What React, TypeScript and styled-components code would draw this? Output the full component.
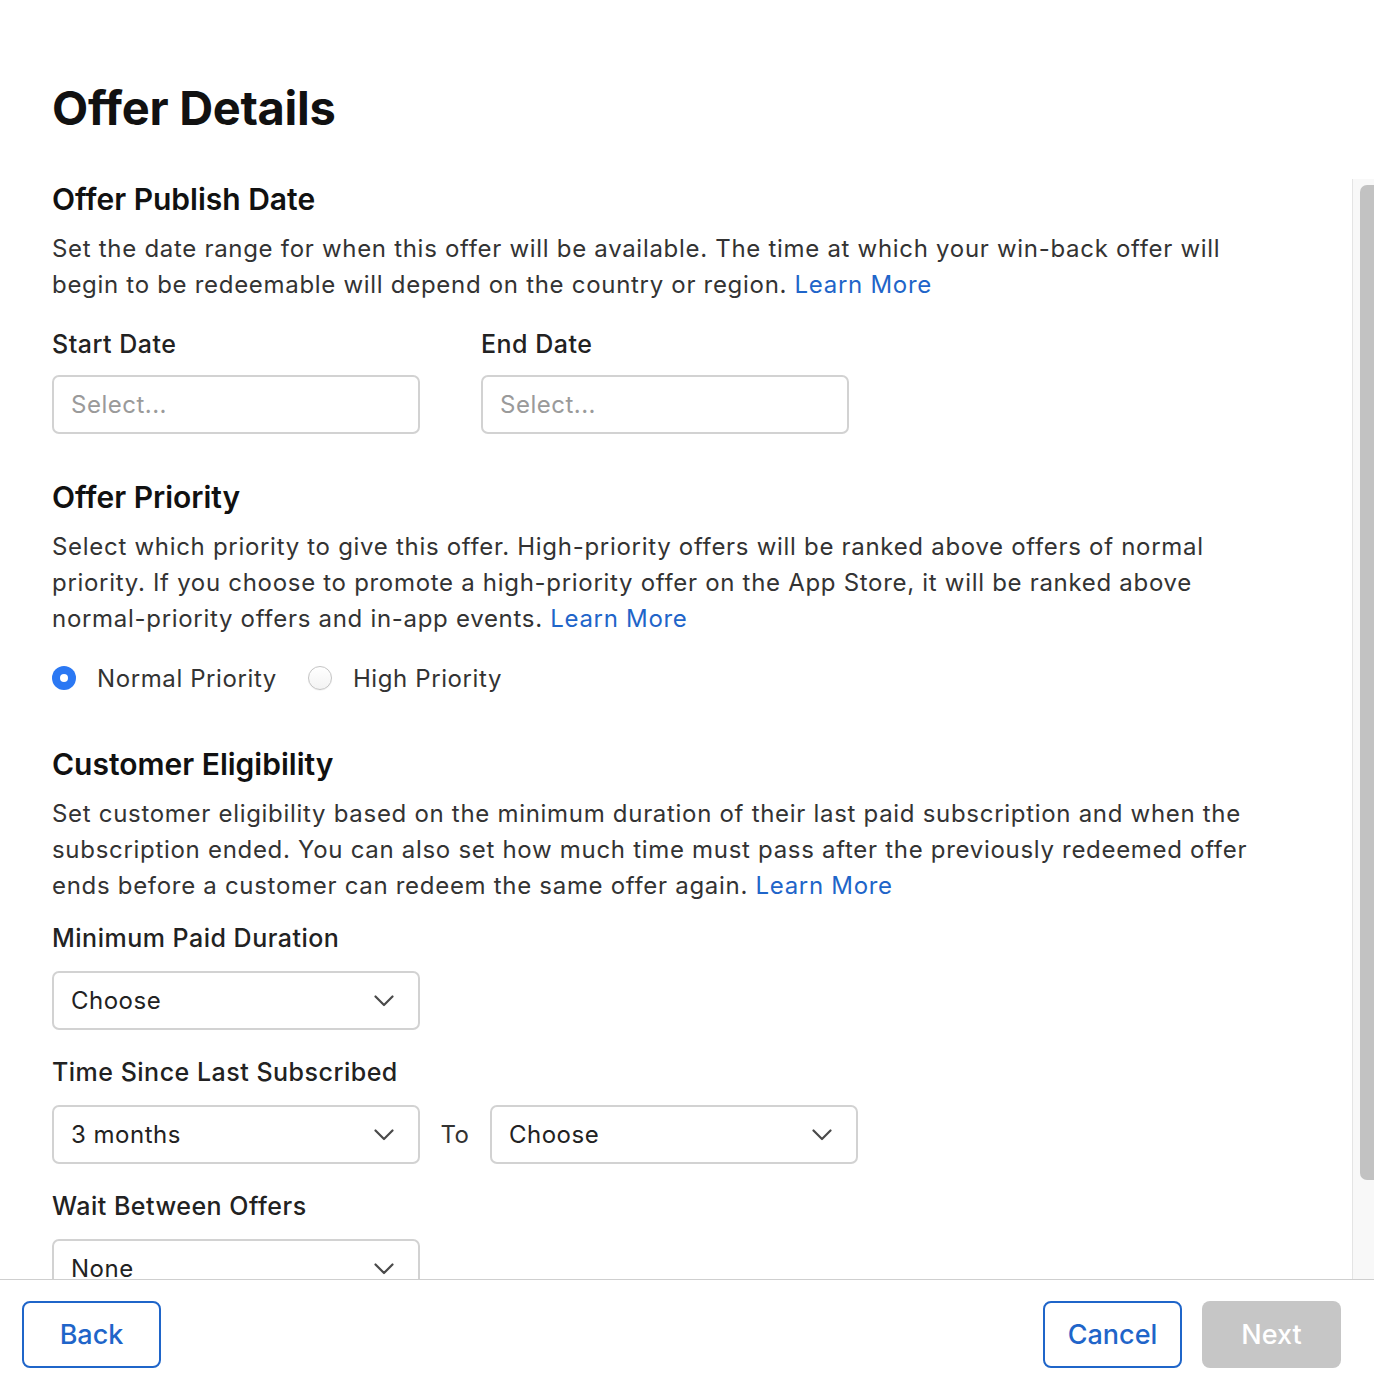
import React from "react";
import styled, { createGlobalStyle } from "styled-components";

const Global = createGlobalStyle`
  html, body { margin: 0; padding: 0; background: #fff; }
  body { font-family: Inter, "Noto Sans", "Liberation Sans", sans-serif; color: #333; }
  * { box-sizing: border-box; }
`;

const Page = styled.div`
  width: 1374px;
  height: 1386px;
  display: flex;
  flex-direction: column;
  background: #fff;
  overflow: hidden;
`;

const Header = styled.header`
  height: 179px;
  flex: none;
  padding: 80px 52px 0;
`;

const Title = styled.h1`
  margin: 0;
  font-size: 47px;
  line-height: 56px;
  font-weight: 700;
  color: #111;
  letter-spacing: -0.3px;
`;

const Body = styled.div`
  flex: 1;
  min-height: 0;
  display: flex;
`;

const Content = styled.main`
  flex: 1;
  min-width: 0;
  overflow: hidden;
  padding: 0 0 0 52px;
`;

const Track = styled.div`
  width: 22px;
  flex: none;
  background: #f8f8f8;
  border-left: 1px solid #e4e4e4;
  padding: 6px 0 99px 7px;
  display: flex;
`;

const Thumb = styled.div`
  flex: 1;
  background: #c2c2c2;
  border-radius: 7px 0 0 7px;
`;

const Section = styled.section<{ $gap?: number }>`
  margin-bottom: ${(p) => p.$gap ?? 0}px;
`;

const Heading = styled.h2`
  margin: 0;
  font-size: 30px;
  line-height: 40px;
  font-weight: 600;
  color: #111;
`;

const Para = styled.p`
  margin: 12px 0 0;
  font-size: 24px;
  line-height: 36px;
  color: #333;
  letter-spacing: 0.7px;
  white-space: nowrap;
`;

const Link = styled.a`
  color: #1f65c9;
  text-decoration: none;
`;

const Label = styled.div<{ $mt?: number }>`
  margin-top: ${(p) => p.$mt ?? 0}px;
  font-size: 25px;
  line-height: 36px;
  font-weight: 500;
  color: #222;
  letter-spacing: 0.5px;
`;

const FieldRow = styled.div`
  display: flex;
  align-items: center;
  gap: 61px;
`;

const FieldCol = styled.div`
  display: flex;
  flex-direction: column;
`;

const Input = styled.div`
  width: 368px;
  height: 59px;
  margin-top: 13px;
  border: 2px solid #d2d2d2;
  border-radius: 7px;
  padding: 0 17px;
  display: flex;
  align-items: center;
  font-size: 24px;
  letter-spacing: 0.5px;
  color: #9a9a9a;
`;

const Select = styled.div`
  width: 368px;
  height: 59px;
  border: 2px solid #d2d2d2;
  border-radius: 7px;
  padding: 0 24px 0 17px;
  display: flex;
  align-items: center;
  justify-content: space-between;
  font-size: 24px;
  letter-spacing: 0.5px;
  color: #222;
  background: #fff;
`;

const SelectRow = styled.div`
  margin-top: 15px;
  display: flex;
  align-items: center;
`;

const ToText = styled.span`
  font-size: 24px;
  color: #333;
  width: 70px;
  text-align: center;
  letter-spacing: 0.5px;
`;

const RadioRow = styled.div`
  margin-top: 23px;
  display: flex;
  align-items: center;
  height: 36px;
`;

const RadioItem = styled.label`
  display: flex;
  align-items: center;
  gap: 21px;
  margin-right: 31px;
  font-size: 24px;
  letter-spacing: 0.6px;
  color: #333;
`;

const RadioDot = styled.span<{ $on?: boolean }>`
  width: 24px;
  height: 24px;
  border-radius: 50%;
  flex: none;
  position: relative;
  ${(p) =>
    p.$on
      ? `background: #2b78f3;
         &::after { content: ""; position: absolute; left: 8px; top: 8px; width: 8px; height: 8px; border-radius: 50%; background: #fff; }`
      : `background: linear-gradient(#fff, #f3f3f3); border: 1px solid #c4c4c4; box-shadow: 0 0.5px 1px rgba(0,0,0,0.08);`}
`;

const Footer = styled.footer`
  height: 107px;
  flex: none;
  border-top: 1px solid #cfcfcf;
  padding: 21px 33px 0 22px;
  display: flex;
  align-items: flex-start;
  gap: 20px;
`;

const Spacer = styled.div`
  flex: 1;
`;

const Button = styled.button<{ $disabled?: boolean }>`
  width: 139px;
  height: 67px;
  border-radius: 8px;
  font-family: inherit;
  font-size: 27px;
  font-weight: 500;
  cursor: pointer;
  ${(p) =>
    p.$disabled
      ? `background: #c6c6c6; border: none; color: #fff;`
      : `background: #fff; border: 2px solid #1f65c9; color: #1f65c9;`}
`;

const Chevron = () => (
  <svg width="20" height="12" viewBox="0 0 20 12" fill="none">
    <path d="M1.5 1.5 L10 10 L18.5 1.5" stroke="#4a4a4a" strokeWidth="2.2" strokeLinecap="round" strokeLinejoin="round" />
  </svg>
);

const Dropdown = ({ value }: { value: string }) => (
  <Select>
    <span>{value}</span>
    <Chevron />
  </Select>
);

export default function App() {
  return (
    <>
      <Global />
      <Page>
        <Header>
          <Title>Offer Details</Title>
        </Header>
        <Body>
          <Content>
            <Section $gap={43}>
              <Heading>Offer Publish Date</Heading>
              <Para>
                Set the date range for when this offer will be available. The time at which your win-back offer will
                <br />
                begin to be redeemable will depend on the country or region. <Link>Learn More</Link>
              </Para>
              <FieldRow>
                <FieldCol>
                  <Label $mt={23}>Start Date</Label>
                  <Input>Select...</Input>
                </FieldCol>
                <FieldCol>
                  <Label $mt={23}>End Date</Label>
                  <Input>Select...</Input>
                </FieldCol>
              </FieldRow>
            </Section>
            <Section $gap={48}>
              <Heading>Offer Priority</Heading>
              <Para>
                Select which priority to give this offer. High-priority offers will be ranked above offers of normal
                <br />
                priority. If you choose to promote a high-priority offer on the App Store, it will be ranked above
                <br />
                normal-priority offers and in-app events. <Link>Learn More</Link>
              </Para>
              <RadioRow>
                <RadioItem>
                  <RadioDot $on />
                  Normal Priority
                </RadioItem>
                <RadioItem>
                  <RadioDot />
                  High Priority
                </RadioItem>
              </RadioRow>
            </Section>
            <Section>
              <Heading>Customer Eligibility</Heading>
              <Para>
                Set customer eligibility based on the minimum duration of their last paid subscription and when the
                <br />
                subscription ended. You can also set how much time must pass after the previously redeemed offer
                <br />
                ends before a customer can redeem the same offer again. <Link>Learn More</Link>
              </Para>
              <Label $mt={16}>Minimum Paid Duration</Label>
              <SelectRow>
                <Dropdown value="Choose" />
              </SelectRow>
              <Label $mt={24}>Time Since Last Subscribed</Label>
              <SelectRow>
                <Dropdown value="3 months" />
                <ToText>To</ToText>
                <Dropdown value="Choose" />
              </SelectRow>
              <Label $mt={24}>Wait Between Offers</Label>
              <SelectRow>
                <Dropdown value="None" />
              </SelectRow>
            </Section>
          </Content>
          <Track>
            <Thumb />
          </Track>
        </Body>
        <Footer>
          <Button>Back</Button>
          <Spacer />
          <Button>Cancel</Button>
          <Button $disabled>Next</Button>
        </Footer>
      </Page>
    </>
  );
}
